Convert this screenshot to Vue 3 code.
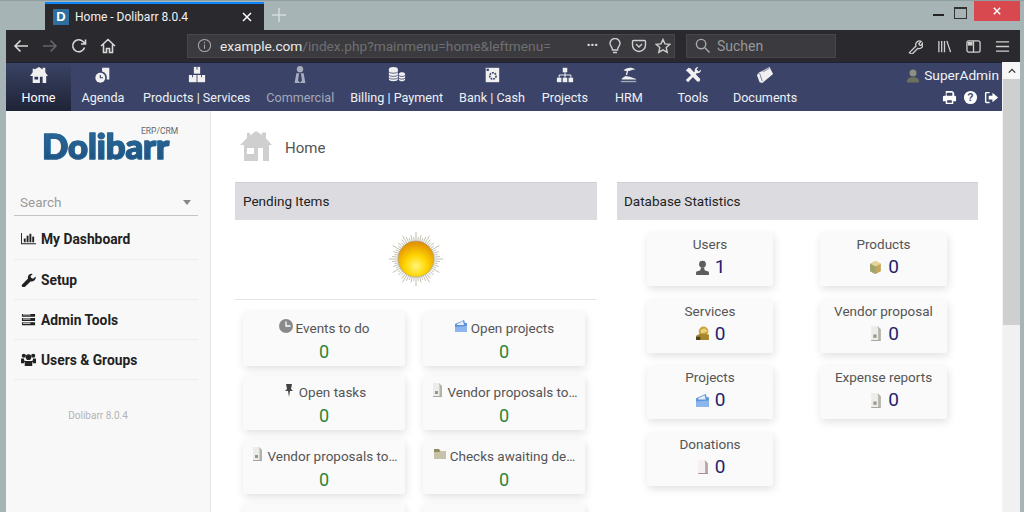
<template>
  <div class="window">
    <!-- browser title bar -->
    <div class="titlebar">
      <div class="tab">
        <span class="favicon">D</span>
        <span class="tab-title">Home - Dolibarr 8.0.4</span>
        <svg class="tab-close" viewBox="0 0 10 10"><path d="M1 1l8 8M9 1l-8 8" /></svg>
      </div>
      <svg class="new-tab" viewBox="0 0 14 14"><path d="M7 0v14M0 7h14" /></svg>
      <div class="win-controls">
        <span class="win-min"></span>
        <span class="win-max"></span>
        <span class="win-close">
          <svg viewBox="0 0 10 10"><path d="M1 1l8 8M9 1l-8 8" /></svg>
        </span>
      </div>
    </div>

    <!-- browser toolbar -->
    <div class="toolbar">
      <svg class="tb-icon" viewBox="0 0 16 16"><path d="M15 8H2M7.500 2.500L2 8l5.500 5.500" /></svg>
      <svg class="tb-icon dim" viewBox="0 0 16 16"><path d="M1 8h13M8.500 2.500L14 8l-5.500 5.500" /></svg>
      <svg class="tb-icon" viewBox="0 0 16 16"><path d="M13.500 9.500A6 6 0 1 1 12 3.500L14 5.500M14.500 1.500v4.500H10" /></svg>
      <svg class="tb-icon" viewBox="0 0 16 16"><path d="M1 8l7-6.500L15 8M3.500 6.500V14.500h3v-4h3v4h3V6.500" /></svg>
      <div class="urlbar">
        <svg class="info" viewBox="0 0 16 16"><circle cx="8" cy="8" r="6.500" /><path d="M8 7v4.500M8 4v1.500" /></svg>
        <span class="url"><b>example.com</b>/index.php?mainmenu=home&amp;leftmenu=</span>
        <span class="url-actions">
          <span class="dots">•••</span>
          <svg viewBox="0 0 16 16"><path d="M5.500 12c0-3-2.500-4-2.500-6.500a5 5 0 0 1 10 0C13 8 10.500 9 10.500 12zM6 14.500h4" /></svg>
          <svg viewBox="0 0 16 16"><path d="M2.500 2.500h11a1 1 0 0 1 1 1V7a6.500 6.500 0 0 1-13 0V3.500a1 1 0 0 1 1-1zM5 6l3 3 3-3" /></svg>
          <svg viewBox="0 0 16 16"><path d="M8 1.500l2 4.400 4.700.5-3.500 3.200 1 4.700L8 11.900l-4.200 2.400 1-4.700L1.300 6.400 6 5.900z" /></svg>
        </span>
      </div>
      <div class="searchbar">
        <svg viewBox="0 0 16 16"><circle cx="6.500" cy="6.500" r="5" /><path d="M10.500 10.500l5 5" /></svg>
        <span>Suchen</span>
      </div>
      <div class="tb-right">
        <svg viewBox="0 0 16 16"><path d="M1.500 14.500l7-7a4 4 0 0 1 5.500-5l-2.500 2.500 1 1.500 1.500.5 1.500-2.500a4 4 0 0 1-5 5.500l-6.500 6.500z" /></svg>
        <svg viewBox="0 0 16 16"><path d="M2 2v12M5 2v12M8 2v12M10.500 2l4 12" /></svg>
        <svg viewBox="0 0 16 16"><rect x="1" y="2" width="14" height="12" rx="2" /><path d="M8 2v12" /><path class="fill" d="M2 3h5v4H2z" /></svg>
        <svg viewBox="0 0 16 16"><path d="M1 3h14M1 8h14M1 13h14" /></svg>
      </div>
    </div>

    <div class="content">
      <div class="page">
        <!-- dolibarr top menu -->
        <nav class="topnav">
          <a v-for="item in menu" :key="item.label" class="nav-item" :class="{ active: item.active, muted: item.muted }">
            <svg class="nav-icon" viewBox="0 0 20 20" v-html="navIcons[item.icon]"></svg>
            <span>{{ item.label }}</span>
          </a>
          <div class="nav-user">
            <div class="user-name">
              <svg viewBox="0 0 16 16"><circle cx="8" cy="5" r="4" fill="#8a8f7e" /><path d="M1 16c0-5 3-6 7-6s7 1 7 6z" fill="#6b705f" /></svg>
              <span>SuperAdmin</span>
            </div>
            <div class="user-actions">
              <svg viewBox="0 0 16 16"><path fill="#fff" d="M4 1h7l2 2v4H11V3H5v4H4zM1 7.500A1.500 1.500 0 0 1 2.500 6h11A1.500 1.500 0 0 1 15 7.500V12h-3v3H4v-3H1zM5.500 11v2.500h5V11z" /></svg>
              <svg viewBox="0 0 16 16"><circle cx="8" cy="8" r="7" fill="#fff" /><text x="8" y="12" text-anchor="middle" class="help">?</text></svg>
              <svg viewBox="0 0 16 16"><path fill="#fff" d="M1 3.500A1.500 1.500 0 0 1 2.500 2H6v1.500H2.500v9H6V14H2.500A1.500 1.500 0 0 1 1 12.500zM9 3l6 5-6 5v-3H5V6h4z" /></svg>
            </div>
          </div>
        </nav>

        <div class="body-row">
          <aside class="sidebar">
            <div class="logo">
              <span class="logo-sub">ERP/CRM</span>
              <span class="logo-text">Dolibarr</span>
            </div>
            <div class="search">
              <span>Search</span>
              <i class="caret"></i>
            </div>
            <ul class="side-menu">
              <li v-for="s in sideMenu" :key="s.label">
                <svg viewBox="0 0 16 16" v-html="sideIcons[s.icon]"></svg>
                <span>{{ s.label }}</span>
              </li>
            </ul>
            <div class="version">Dolibarr 8.0.4</div>
          </aside>

          <main class="main">
            <div class="heading">
              <svg viewBox="0 0 32 30"><path fill="#cfcfcf" d="M16 0l6 4V1.500h4v6l6 6.500h-3v16h-6V17h-5v13H4V14H0L7 7V2h3v2.500z" /><rect x="7" y="17" width="7" height="6" fill="#fff" /></svg>
              <span>Home</span>
            </div>

            <div class="columns">
              <section>
                <h3 class="section-head">Pending Items</h3>
                <div class="weather">
                  <svg viewBox="0 0 54 54">
                    <defs>
                      <radialGradient id="sunfill" cx="50%" cy="70%" r="68%">
                        <stop offset="0" stop-color="#fff67a" />
                        <stop offset="0.45" stop-color="#ffd400" />
                        <stop offset="1" stop-color="#e08e06" />
                      </radialGradient>
                    </defs>
                    <line v-for="(r, i) in rays" :key="i" :x1="r.x1" :y1="r.y1" :x2="r.x2" :y2="r.y2" />
                    <circle cx="27" cy="27" r="18" fill="url(#sunfill)" />
                  </svg>
                </div>
                <div class="pending-grid">
                  <div v-for="c in pending" :key="c.key" class="card">
                    <div class="card-title">
                      <svg v-if="c.icon" class="raised" viewBox="0 0 14 14" v-html="cardIcons[c.icon]"></svg>
                      <span>{{ c.title }}</span>
                    </div>
                    <div class="card-value green">{{ c.value }}</div>
                  </div>
                </div>
              </section>

              <section>
                <h3 class="section-head db">Database Statistics</h3>
                <div class="stats-grid">
                  <div v-for="c in stats" :key="c.title" class="card stat">
                    <div class="card-title"><span>{{ c.title }}</span></div>
                    <div class="card-value navy">
                      <svg viewBox="0 0 14 14" v-html="cardIcons[c.icon]"></svg>
                      <span>{{ c.value }}</span>
                    </div>
                  </div>
                </div>
              </section>
            </div>
          </main>
        </div>
      </div>

      <div class="scrollbar">
        <div class="sb-up"><svg viewBox="0 0 10 6"><path d="M1 5l4-4 4 4" /></svg></div>
        <div class="sb-thumb"></div>
      </div>
    </div>
  </div>
</template>

<script setup>
const menu = [
  { label: 'Home', icon: 'home', active: true },
  { label: 'Agenda', icon: 'agenda' },
  { label: 'Products | Services', icon: 'products' },
  { label: 'Commercial', icon: 'commercial', muted: true },
  { label: 'Billing | Payment', icon: 'billing' },
  { label: 'Bank | Cash', icon: 'bank' },
  { label: 'Projects', icon: 'projects' },
  { label: 'HRM', icon: 'hrm' },
  { label: 'Tools', icon: 'tools' },
  { label: 'Documents', icon: 'documents' },
]

const navIcons = {
  home: '<path d="M10 1l4 3V2h3v5l3 4h-2v8h-4v-7h-3v7H3v-8H0l3-4V3h2v1z"/><rect x="5" y="12" width="4" height="3" fill="#2c3350"/>',
  agenda: '<path d="M9 2h8v13h-3a7 7 0 0 0-5-9z"/><circle cx="7" cy="13" r="5.500"/><path d="M7 10v3h3" fill="none" stroke="#3b4468" stroke-width="1.200"/>',
  products: '<rect x="6.500" y="1" width="7" height="7.500"/><rect x="1" y="10" width="8.500" height="8"/><rect x="10.500" y="10" width="8.500" height="8"/><path d="M10 1v3M5 10v2.500M15 10v2.500" stroke="#3b4468"/>',
  commercial: '<circle cx="10" cy="3.500" r="3.500"/><path d="M6 8h8l2 11H4z"/><path d="M9 8h2l1.200 8L10 18.500 7.800 16z" fill="#3b4468"/>',
  billing: '<path d="M1 3.500C1 2 3 1 6 1s5 1 5 2.500v11C11 16 9 17 6 17s-5-1-5-2.500z"/><path d="M1 6.500c1 2 9 2 10 0M1 10c1 2 9 2 10 0M1 13c1 2 9 2 10 0" fill="none" stroke="#3b4468" stroke-width=".9"/><path d="M12 9c0-1.300 2-2 3.500-2s3.500.7 3.500 2v6c0 1.300-2 2-3.500 2S12 16.300 12 15z"/><path d="M12 10.500c1 1.500 6 1.500 7 0M12 13.500c1 1.500 6 1.500 7 0" fill="none" stroke="#3b4468" stroke-width=".9"/>',
  bank: '<path d="M3 2h15v16H3z"/><circle cx="11" cy="11" r="3.500" fill="none" stroke="#3b4468" stroke-width="1.800" stroke-dasharray="2 1"/><rect x="4" y="3" width="2.500" height="2.500" fill="#3b4468"/>',
  projects: '<rect x="7.500" y="2" width="5" height="5"/><rect x="1" y="13" width="5" height="5"/><rect x="7.500" y="13" width="5" height="5"/><rect x="14" y="13" width="5" height="5"/><path d="M10 7v6M3.500 13v-3h13v3" fill="none" stroke="#fff"/>',
  hrm: '<path d="M4 5c3-4 10-4 13-1l-5 .5 1 .5-4 .5-1 4.500H6.500l1-4.500z"/><path d="M2 14l4-3 5 1 7 2.500V15H2z"/><path d="M1 16.500h17V18H1z" opacity=".6"/>',
  tools: '<path d="M2 5l3-3 2 .5 11 12-.5 2.500-2.500.5L4 6.500z"/><path d="M16 1a4 4 0 0 0-4 5L2 15.500 4.500 18 14 8a4 4 0 0 0 5-4l-2.500 2L14 4z"/>',
  documents: '<path d="M1 10l3-3 11-6 4 8-12 10-3-1z"/><path d="M7 6l7-4 1 1-7 4z" fill="#3b4468" opacity=".5"/><path d="M4 8l3 9" stroke="#3b4468" stroke-width=".7"/>',
}

const sideMenu = [
  { label: 'My Dashboard', icon: 'chart' },
  { label: 'Setup', icon: 'wrench' },
  { label: 'Admin Tools', icon: 'server' },
  { label: 'Users & Groups', icon: 'users' },
]

const sideIcons = {
  chart: '<path d="M0 2h1v11h15v1H0z"/><rect x="3" y="8" width="2" height="4"/><rect x="6" y="5" width="2" height="7"/><rect x="9" y="3" width="2" height="9"/><rect x="12" y="6" width="2" height="6"/>',
  wrench: '<path d="M1 13.500l6.500-6.500a4 4 0 0 1 5-5l-2.500 2.500 1 2 2 .8 2.500-2.500a4 4 0 0 1-5 5L4 16a2 2 0 0 1-3-2.500z"/>',
  server: '<path d="M1 2h14v3H1zM1 6.500h14v3H1zM1 11h14v3H1z"/><path d="M2 3h8M2 7.500h8M2 12h8" stroke="#f8f8f8"/>',
  users: '<circle cx="8" cy="5.500" r="3"/><circle cx="3" cy="4" r="2.200"/><circle cx="13" cy="4" r="2.200"/><path d="M0 7h3l1 3-1 2H0zM16 7h-3l-1 3 1 2h3zM4 9.500h8v5.500H4z"/>',
}

const pending = [
  { key: 'e', title: 'Events to do', value: 0, icon: 'clock' },
  { key: 'o', title: 'Open projects', value: 0, icon: 'project' },
  { key: 't', title: 'Open tasks', value: 0, icon: 'pin' },
  { key: 'v1', title: 'Vendor proposals to…', value: 0, icon: 'doc' },
  { key: 'v2', title: 'Vendor proposals to…', value: 0, icon: 'doc' },
  { key: 'c', title: 'Checks awaiting de…', value: 0, icon: 'check' },
  { key: 'x1', title: '', value: '', icon: '' },
  { key: 'x2', title: '', value: '', icon: '' },
]

const stats = [
  { title: 'Users', value: 1, icon: 'user' },
  { title: 'Products', value: 0, icon: 'product' },
  { title: 'Services', value: 0, icon: 'service' },
  { title: 'Vendor proposal', value: 0, icon: 'doc' },
  { title: 'Projects', value: 0, icon: 'project' },
  { title: 'Expense reports', value: 0, icon: 'doc' },
  { title: 'Donations', value: 0, icon: 'donation' },
]

const cardIcons = {
  clock: '<circle cx="7" cy="7" r="7" fill="#8a8a8a"/><path d="M7 2.500V7h4.500" fill="none" stroke="#fff" stroke-width="1.300"/>',
  project: '<path d="M1 5l9-4 1 3h2v9H1z" fill="#5d93dd"/><path d="M3 5l6-3 1 4H3z" fill="#e6eefa"/><path d="M1 8l12-1v6H1z" fill="#8db6ec"/>',
  pin: '<path d="M4 1h6l-1 5 2 2H8l-1 6-1-6H3l2-2z" fill="#444"/>',
  doc: '<path d="M3 0h6l3 3v11H3z" fill="#ececea"/><path d="M9 0l3 3v11H9.500V3z" fill="#b5b3a8"/><path d="M5 8h3v3H5z" fill="#98968c"/><path d="M3 13h8v1H3z" fill="#a8a69c"/>',
  check: '<path d="M1 2h5l2 2h5v8H1z" fill="#c6c3a8"/><path d="M1 2h5l1 3H1z" fill="#8e8a5c"/>',
  user: '<circle cx="7" cy="4" r="3.200" fill="#5d5d5d"/><path d="M5.500 7h3l.5 2.500 4 1.500v3H1v-3l4-1.500z" fill="#5d5d5d"/>',
  product: '<path d="M7 1l5 2.500v7L7 13l-5-2.500v-7z" fill="#c4a75e"/><path d="M7 1l5 2.500L7 6 2 3.500z" fill="#e6d49a"/><path d="M2 3.500v7L7 13V6z" fill="#9ea56c"/>',
  service: '<circle cx="8" cy="5" r="4.500" fill="#c9a63a"/><path d="M1 13V9l4-2 8 1v5z" fill="#a5882e"/><path d="M5 4l4-2 3 3-6 2z" fill="#e9d27c"/><path d="M1 10h4v3H1z" fill="#4e4020"/>',
  donation: '<path d="M3 1h6l3 3v10H3z" fill="#f5efef"/><path d="M9 1l3 3v10H9.500V4z" fill="#b7a2a6"/><path d="M3 13h9v1H3z" fill="#a9919a"/>',
}

// spikes around the weather sun
const rays = Array.from({ length: 60 }, (_, i) => {
  const a = (i / 60) * Math.PI * 2
  const len = i % 5 === 0 ? 27 : i % 2 === 0 ? 22 : 24
  return {
    x1: 27 + Math.cos(a) * 17,
    y1: 27 + Math.sin(a) * 17,
    x2: 27 + Math.cos(a) * len,
    y2: 27 + Math.sin(a) * len,
  }
})
</script>

<style scoped>
.window {
  width: 1024px;
  height: 512px;
  overflow: hidden;
  display: flex;
  flex-direction: column;
  background: #a6b4b6;
  font-family: Roboto, "Liberation Sans", sans-serif;
  color: #444;
}

/* title bar */
.titlebar {
  height: 30px;
  flex: none;
  display: flex;
  align-items: flex-start;
  padding-left: 45px;
  border-top: 1px solid #8f9ea0;
  box-sizing: border-box;
}
.tab {
  width: 219px;
  height: 29px;
  margin-top: 1px;
  box-sizing: border-box;
  border-top: 2px solid #0a84ff;
  background: #2a2a2e;
  display: flex;
  align-items: center;
  padding: 0 12px 2px 8px;
  color: #f2f2f2;
  font-size: 12px;
}
.favicon {
  width: 16px;
  height: 16px;
  background: #2f6f9f;
  color: #fff;
  font: bold 13px/16px "Liberation Sans", sans-serif;
  text-align: center;
  margin-right: 6px;
}
.tab-title { flex: 1; white-space: nowrap; }
.tab-close { width: 10px; height: 10px; fill: none; stroke: #fff; stroke-width: 1.500; }
.new-tab { width: 14px; height: 14px; margin: 7px 0 0 8px; fill: none; stroke: #d5dcdd; stroke-width: 1.500; }
.win-controls {
  margin-left: auto;
  display: flex;
  align-items: flex-start;
  margin-right: 4px;
}
.win-min { width: 11px; height: 2px; background: #222; margin: 13px 10px 0 0; }
.win-max { width: 11px; height: 9px; border: 1px solid #333; border-top-width: 2px; margin: 6px 7px 0 0; box-sizing: content-box; }
.win-close {
  width: 46px;
  height: 20px;
  background: #d8484f;
  display: flex;
  align-items: center;
  justify-content: center;
}
.win-close svg { width: 8px; height: 8px; fill: none; stroke: #fff; stroke-width: 1.800; }

/* browser toolbar */
.toolbar {
  height: 32px;
  flex: none;
  margin: 0 4px 0 6px;
  background: #2a2a2e;
  display: flex;
  align-items: center;
  padding-left: 7px;
  color: #bbb;
  box-sizing: border-box;
}
.tb-icon {
  width: 16px;
  height: 16px;
  margin-right: 13px;
  fill: none;
  stroke: #d8d8d8;
  stroke-width: 1.600;
  flex: none;
}
.tb-icon.dim { stroke: #66666a; }
.urlbar {
  width: 488px;
  height: 24px;
  margin: 0 0 1px 58px;
  background: #3b3b3f;
  border: 1px solid #47474b;
  box-sizing: border-box;
  display: flex;
  align-items: center;
  padding: 0 3px 0 9px;
  font-size: 13.700px;
  overflow: hidden;
}
.info { width: 15px; height: 15px; fill: none; stroke: #aaa; stroke-width: 1.100; flex: none; margin-right: 8px; }
.url { color: #6f6f73; white-space: nowrap; flex: 1; overflow: hidden; width: 0; margin-right: 6px; }
.url b { color: #e8e8e8; font-weight: 400; }
.url-actions { display: flex; align-items: center; gap: 8px; flex: none; }
.url-actions svg { width: 16px; height: 16px; fill: none; stroke: #cfcfcf; stroke-width: 1.400; }
.dots { font-size: 11px; color: #ddd; margin-right: 1px; }
.searchbar {
  width: 150px;
  height: 24px;
  margin: 0 0 1px 11px;
  background: #3b3b3f;
  border: 1px solid #47474b;
  box-sizing: border-box;
  display: flex;
  align-items: center;
  padding-left: 8px;
  font-size: 14px;
  color: #97979a;
}
.searchbar svg { width: 15px; height: 15px; fill: none; stroke: #aaa; stroke-width: 1.500; margin-right: 7px; }
.tb-right { display: flex; align-items: center; gap: 14px; margin-left: 72px; }
.tb-right svg { width: 15px; height: 15px; fill: none; stroke: #cfcfcf; stroke-width: 1.400; }
.tb-right .fill { fill: #cfcfcf; stroke: none; }

/* page */
.content {
  flex: 1;
  min-height: 0;
  display: flex;
  margin: 0 4px 0 6px;
}
.page {
  flex: 1;
  min-width: 0;
  display: flex;
  flex-direction: column;
  background: #fff;
}
.topnav {
  height: 49px;
  flex: none;
  display: flex;
  background: #3b4468;
  border-top: 1px solid #1d2238;
  box-sizing: border-box;
}
.nav-item {
  min-width: 64px;
  padding: 0 8px;
  box-sizing: border-box;
  display: flex;
  flex-direction: column;
  align-items: center;
  color: #eef0f6;
  font-size: 12.600px;
  line-height: 15px;
  white-space: nowrap;
  fill: #f0f0f0;
}
.nav-item.active {
  width: 65px;
  background: linear-gradient(#3a4365, #1f2336);
  color: #fff;
}
.nav-item.muted { color: #a4a9ba; fill: #a9aebf; }
.nav-icon { width: 18px; height: 18px; margin: 3px 0 6px; }
.nav-user {
  margin-left: auto;
  padding-right: 3px;
  display: flex;
  flex-direction: column;
  align-items: flex-end;
  color: #f2f2f6;
  font-size: 13.700px;
}
.user-name { display: flex; align-items: center; gap: 4px; margin-top: 4px; }
.user-name svg { width: 14px; height: 15px; }
.user-actions { display: flex; gap: 6px; margin-top: 7px; }
.user-actions svg { width: 15px; height: 15px; }
.help { font: bold 11px "Liberation Sans", sans-serif; fill: #3b4468; }

.body-row { flex: 1; min-height: 0; display: flex; }
.sidebar {
  width: 205px;
  flex: none;
  box-sizing: border-box;
  background: #f8f8f8;
  border-right: 1px solid #e6e6e6;
  padding: 0 12px 0 8px;
  color: #222;
}
.logo {
  height: 81px;
  box-sizing: border-box;
  padding: 17px 0 0 28px;
  position: relative;
}
.logo-text {
  display: block;
  font: 900 34.500px/36px Lato, "DejaVu Sans", sans-serif;
  -webkit-text-stroke: 1.200px #245f90;
  background: linear-gradient(#2c6c9e, #1e4f7c);
  -webkit-background-clip: text;
  background-clip: text;
  color: transparent;
}
.logo-sub {
  position: absolute;
  left: 127px;
  top: 15px;
  font-size: 8.500px;
  color: #666;
}
.search {
  height: 24px;
  border-bottom: 1px solid #c4c4c8;
  display: flex;
  align-items: center;
  justify-content: space-between;
  padding: 0 7px 3px 6px;
  font-size: 13.500px;
  color: #9a9a9a;
  box-sizing: border-box;
}
.caret {
  border: 4.500px solid transparent;
  border-top: 5px solid #888;
  border-bottom: 0;
}
.side-menu { list-style: none; margin: 4px 0 0; padding: 0; }
.side-menu li {
  height: 40px;
  box-sizing: border-box;
  display: flex;
  align-items: center;
  gap: 5px;
  padding: 0 0 0 7px;
  border-bottom: 1px solid #ececec;
  font-size: 13.800px;
  font-weight: 700;
  color: #222;
}
.side-menu li:first-child { padding-bottom: 2px; }
.side-menu svg { width: 15px; height: 15px; fill: #222; flex: none; }
.version {
  margin: 30px 16px 0 0;
  text-align: center;
  font-size: 10px;
  color: #b4b4b4;
}

.main { flex: 1; min-width: 0; padding: 20px 24px 0 24px; overflow: hidden; }
.heading {
  height: 30px;
  display: flex;
  align-items: center;
  margin: 0 0 21px 5px;
  font-size: 15px;
  color: #555;
}
.heading svg { width: 32px; height: 30px; margin-right: 13px; }
.heading span { padding-top: 3px; }
.columns { display: grid; grid-template-columns: 362px 361px; column-gap: 20px; }
.section-head {
  margin: 0;
  height: 38px;
  box-sizing: border-box;
  background: #dcdce0;
  border-top: 1px solid #cfcfd3;
  padding: 0 8px 1px;
  display: flex;
  align-items: center;
  font-size: 13.500px;
  font-weight: 400;
  color: #222;
}
.section-head.db { padding-left: 7px; }
.weather {
  height: 80px;
  box-sizing: border-box;
  border-bottom: 1px solid #e4e4e4;
  display: flex;
  align-items: flex-start;
  justify-content: center;
  padding-top: 12px;
  margin-right: 1px;
}
.weather svg { width: 54px; height: 54px; stroke: #a8a48c; stroke-width: 0.700; filter: blur(0.5px); }
.pending-grid {
  display: grid;
  grid-template-columns: 162px 162px;
  grid-auto-rows: 54px;
  gap: 10px 18px;
  padding: 12px 0 0 8px;
}
.stats-grid {
  display: grid;
  grid-template-columns: 126px 127px;
  grid-auto-rows: 53px;
  gap: 13.500px 47px;
  padding: 13px 0 0 30px;
}
.card {
  background: #fafafa;
  box-shadow: 1px 3px 8px rgba(0, 0, 0, 0.12);
  border-radius: 2px;
  text-align: center;
  padding-top: 8px;
  box-sizing: border-box;
  overflow: hidden;
}
.card-title {
  height: 17px;
  font-size: 13.500px;
  line-height: 17px;
  color: #555;
  white-space: nowrap;
  display: flex;
  align-items: center;
  justify-content: center;
  gap: 3px;
}
.card-title svg { width: 14px; height: 14px; flex: none; }
.card-title svg.raised { margin-top: -5px; }
.card-value {
  margin-top: 4px;
  font-size: 18px;
  line-height: 22px;
  display: flex;
  align-items: center;
  justify-content: center;
  gap: 5px;
}
.card-value svg { width: 15px; height: 15px; }
.green { color: #2b8538; }
.navy { color: #1f1f70; }
.stat { padding-top: 3px; }
.stat .card-value { margin-top: 3px; font-size: 19px; }

.scrollbar { width: 18px; flex: none; background: #f0f1f0; border-left: 1px solid #f4f4f4; box-sizing: border-box; }
.sb-up {
  height: 17px;
  background: #f6f6f6;
  display: flex;
  align-items: center;
  justify-content: center;
}
.sb-up svg { width: 8px; height: 6px; fill: none; stroke: #333; stroke-width: 1.600; }
.sb-thumb { height: 246px; background: #cdd0cf; }
</style>

<style>
html, body { margin: 0; padding: 0; }
</style>
